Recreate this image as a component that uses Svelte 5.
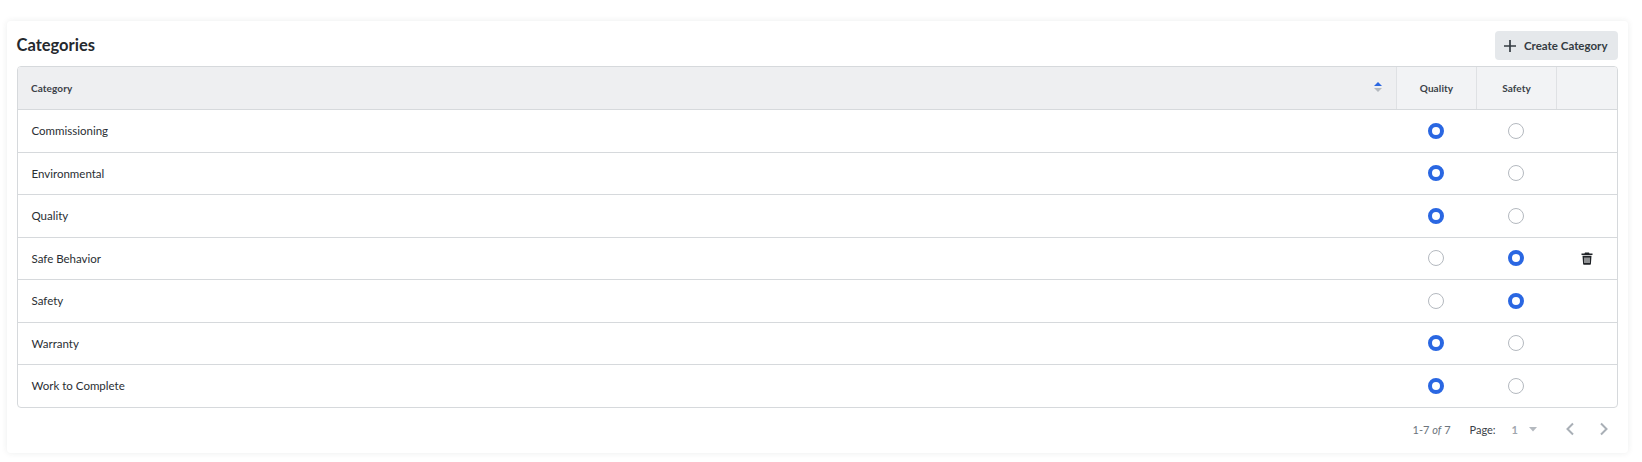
<script>
  const categories = [
    { name: 'Commissioning', type: 'quality' },
    { name: 'Environmental', type: 'quality' },
    { name: 'Quality', type: 'quality' },
    { name: 'Safe Behavior', type: 'safety', removable: true },
    { name: 'Safety', type: 'safety' },
    { name: 'Warranty', type: 'quality' },
    { name: 'Work to Complete', type: 'quality' }
  ];
</script>

<div class="page">
  <section class="card">
    <header class="title-row">
      <h2>Categories</h2>
      <button class="create">
        <svg width="14" height="14" viewBox="0 0 14 14"><path d="M7 1v12M1 7h12" stroke="#343b42" stroke-width="1.7" fill="none" /></svg>
        Create Category
      </button>
    </header>

    <div class="table">
      <div class="row head">
        <div class="cell name">
          <span>Category</span>
          <svg class="sort" width="10" height="12" viewBox="0 0 10 12">
            <path d="M5 1l4 4H1z" fill="#2a67e2" />
            <path d="M5 11L1 7h8z" fill="#b4b9bf" />
          </svg>
        </div>
        <div class="cell mid">Quality</div>
        <div class="cell mid">Safety</div>
        <div class="cell mid"></div>
      </div>
      {#each categories as cat}
        <div class="row">
          <div class="cell name">{cat.name}</div>
          <div class="cell mid"><span class="radio" class:on={cat.type === 'quality'}></span></div>
          <div class="cell mid"><span class="radio" class:on={cat.type === 'safety'}></span></div>
          <div class="cell mid">
            {#if cat.removable}
              <svg width="12" height="13" viewBox="0 0 12 13">
                <path d="M4 0.5h4l.5 1H11.500v1.500H.5V1.500h3z" fill="#1f2226" />
                <path fill-rule="evenodd" d="M1.500 3.800h9l-.6 8.200a.8.8 0 0 1-.8.700H2.900a.8.8 0 0 1-.8-.7zM3.500 5.500v5.500h1V5.500zM5.500 5.500v5.500h1V5.500zM7.500 5.500v5.500h1V5.500z" fill="#1f2226" />
              </svg>
            {/if}
          </div>
        </div>
      {/each}
    </div>

    <footer class="pager">
      <span class="count">1-7 <i>of</i> 7</span>
      <span class="page-label">Page:</span>
      <span class="page-select">1
        <svg width="8" height="5" viewBox="0 0 8 5"><path d="M0 0h8L4 4.500z" fill="#b4b9bf" /></svg>
      </span>
      <span class="arrows">
        <svg width="10" height="14" viewBox="0 0 10 14"><path d="M8 1.500L2.500 7 8 12.500" stroke="#a9afb6" stroke-width="2" fill="none" /></svg>
        <svg width="10" height="14" viewBox="0 0 10 14"><path d="M2 1.500L7.500 7 2 12.500" stroke="#a9afb6" stroke-width="2" fill="none" /></svg>
      </span>
    </footer>
  </section>
</div>

<style>
  :global(body) {
    background: #fff;
    font-family: Lato, "Liberation Sans", sans-serif;
    color: #2f343a;
  }

  .page {
    padding: 21px 14px 9px 7px;
  }

  .card {
    height: 432px;
    box-sizing: border-box;
    padding: 10px 10px 0;
    background: #fff;
    border-radius: 4px;
    box-shadow: 0 0 6px rgba(40, 50, 60, 0.09);
  }

  .title-row {
    display: flex;
    justify-content: space-between;
    align-items: center;
    height: 29px;
    margin-bottom: 6px;
  }

  h2 {
    margin: -2px 0 0 -0.5px;
    font-size: 16.500px;
    font-weight: 700;
    color: #25292e;
  }

  .create {
    display: flex;
    align-items: center;
    gap: 7px;
    width: 123px;
    height: 29px;
    padding: 0 0 0 8px;
    border: none;
    border-radius: 4px;
    background: #e5e8eb;
    color: #343b42;
    font: 700 11.500px Lato, sans-serif;
    white-space: nowrap;
  }

  .table {
    border: 1px solid #d6d9dc;
    border-radius: 4px;
    height: 342px;
    box-sizing: border-box;
    overflow: hidden;
  }

  .row {
    display: grid;
    grid-template-columns: 1fr 80px 80px 61px;
    height: 42.500px;
    border-top: 1px solid #d6d9dc;
    box-sizing: border-box;
    font-size: 11.500px;
    color: #2a2e33;
  }

  .row.head {
    height: 42px;
    border-top: none;
    background: #f2f3f5;
    font-size: 10px;
    font-weight: 700;
    color: #3b4148;
    letter-spacing: 0.1px;
  }

  .cell {
    display: flex;
    align-items: center;
  }

  .name {
    padding-left: 13.500px;
    justify-content: space-between;
  }

  .head .name {
    background: #eeeff1;
    padding-left: 13px;
    padding-right: 13px;
  }

  .head .name span {
    margin-top: -1px;
  }

  .sort {
    margin-top: -2px;
  }

  .mid {
    justify-content: center;
  }

  .head .mid {
    border-left: 1px solid #dfe1e4;
    box-sizing: border-box;
  }

  .radio {
    width: 16px;
    height: 16px;
    box-sizing: border-box;
    border: 1px solid #b4b9bf;
    border-radius: 50%;
    background: #fff;
  }

  .radio.on {
    border: 4px solid #2a67e2;
  }

  .pager {
    display: flex;
    align-items: center;
    justify-content: flex-end;
    height: 42px;
    font-size: 11px;
    color: #6c747c;
  }

  .count {
    margin-right: 19px;
  }

  .count i {
    font-style: italic;
  }

  .page-label {
    color: #3b4148;
    margin-right: 16px;
  }

  .page-select {
    display: flex;
    align-items: center;
    gap: 11px;
    color: #a0a6ad;
    font-weight: 700;
    margin-right: 28px;
  }

  .arrows {
    display: flex;
    gap: 24px;
    margin-right: 9px;
  }
</style>
